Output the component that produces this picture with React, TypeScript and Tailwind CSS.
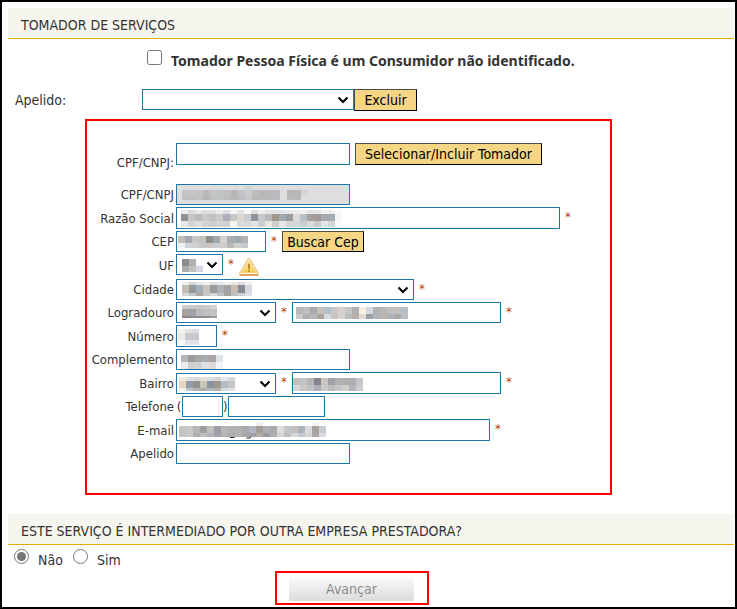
import type { ReactNode } from "react";

type Band = { h: number; cells: string };

const fieldBase = "shrink-0 rounded-none border border-[#1f78a4] text-black outline-none";

const buttonBase =
  "shrink-0 border border-t-[#4d4d4d] border-l-[#4d4d4d] border-r-black border-b-black bg-[#f4d684] text-center text-sm leading-5 text-black";

// Blurred-out value: bands of 7px wide blocks, "-" leaves a hole.
function Mosaic({ className, bands }: { className: string; bands: Band[] }) {
  const rows = bands.map((band) => band.cells.split(" "));
  const height = bands.reduce((sum, band) => sum + band.h, 0);
  const width = Math.max(...rows.map((row) => row.length)) * 7;
  let y = 0;

  return (
    <svg
      aria-hidden="true"
      width={width}
      height={height}
      shapeRendering="crispEdges"
      className={`pointer-events-none absolute ${className}`}
    >
      {bands.map((band, r) => {
        const top = y;
        y += band.h;
        return rows[r].map((cell, c) =>
          cell === "-" ? null : (
            <rect key={`${r}-${c}`} x={c * 7} y={top} width={7} height={band.h} fill={`#${cell}`} />
          ),
        );
      })}
    </svg>
  );
}

function Row({ id, label, children }: { id: string; label: string; children: ReactNode }) {
  return (
    <div className="flex items-end gap-0.5">
      <label htmlFor={id} className="w-[87px] shrink-0 text-right leading-5 whitespace-nowrap">
        {label}
      </label>
      <div className="flex items-end">{children}</div>
    </div>
  );
}

function Field({
  id,
  label,
  className,
  children,
}: {
  id: string;
  label?: string;
  className: string;
  children?: ReactNode;
}) {
  return (
    <div className="relative flex">
      <input id={id} type="text" aria-label={label} className={`${fieldBase} ${className}`} />
      {children}
    </div>
  );
}

function Choice({ id, className, children }: { id: string; className: string; children?: ReactNode }) {
  return (
    <div className="relative flex">
      <select id={id} className={`${fieldBase} h-[21px] appearance-none bg-white ${className}`}>
        <option value=""></option>
      </select>
      <svg
        aria-hidden="true"
        width="12"
        height="8"
        viewBox="0 0 12 8"
        className="pointer-events-none absolute right-[5px] top-[7px]"
      >
        <path d="M1.5 1.4 L6 5.9 L10.5 1.4" fill="none" stroke="#000" strokeWidth="2.1" />
      </svg>
      {children}
    </div>
  );
}

function Required() {
  return <span className="w-4 self-start text-center leading-5 text-[#b8400c]">*</span>;
}

function SectionTitle({ children }: { children: ReactNode }) {
  return (
    <h2 className="ml-1.5 mr-px h-[31px] border-b border-[#e6ac00] bg-[#f6f6ee] pl-[13px] pt-[7px] font-['DejaVu_Sans_Condensed','DejaVu_Sans',sans-serif] text-sm leading-5">
      {children}
    </h2>
  );
}

function WarningIcon() {
  return (
    <svg width="20" height="18" viewBox="0 0 20 18" role="img" aria-label="Aviso">
      <defs>
        <linearGradient id="warn" x1="0" y1="0" x2="0" y2="1">
          <stop offset="0" stopColor="#fbeeb4" />
          <stop offset="1" stopColor="#f5ca4c" />
        </linearGradient>
      </defs>
      <path
        d="M10 .9 Q10.8 .9 11.3 1.9 L19 15.2 Q19.6 17 17.8 17 L2.2 17 Q.4 17 1 15.2 L8.7 1.9 Q9.2 .9 10 .9 Z"
        fill="#fffbe8"
        stroke="#ecc274"
        strokeWidth="1.3"
        strokeLinejoin="round"
      />
      <path d="M1.4 16.9 H18.6" stroke="#dc9c58" strokeWidth="1.6" strokeLinecap="round" />
      <path d="M10 3.4 L16.8 14.6 H3.2 Z" fill="url(#warn)" stroke="#f0c650" strokeWidth=".8" strokeLinejoin="round" />
      <path d="M10 6.6 V10.6" stroke="#b8922c" strokeWidth="2" strokeLinecap="round" />
      <circle cx="10" cy="13" r="1.1" fill="#b8922c" />
    </svg>
  );
}

export default function App() {
  return (
    <main className="min-h-screen border-2 border-black bg-white pt-1.5 font-['DejaVu_Sans_Condensed','DejaVu_Sans',sans-serif] text-[13px] text-[#333]">
      <SectionTitle>TOMADOR DE SERVIÇOS</SectionTitle>

      <div className="ml-[145px] mt-[11px] flex h-[22px] items-start gap-[9px]">
        <input id="anonimo" type="checkbox" className="size-[15px] shrink-0" />
        <label htmlFor="anonimo" className="font-['Noto_Sans',sans-serif] text-sm font-bold leading-[22px]">
          Tomador Pessoa Física é um Consumidor não identificado.
        </label>
      </div>

      <div className="ml-[13px] mt-[17px] flex items-start">
        <label htmlFor="apelido-busca" className="w-[127px] text-sm leading-[22px]">
          Apelido:
        </label>
        <Choice id="apelido-busca" className="w-[212px]" />
        <button type="button" className={`${buttonBase} h-[22px] w-[63px]`}>
          Excluir
        </button>
      </div>

      <section className="ml-[83px] mt-2 flex w-[527px] flex-col gap-0.5 border-2 border-[#f00] pb-[29px] pt-[22px]">
        <div className="mb-2 flex h-[31px] items-start gap-0.5">
          <label htmlFor="busca" className="w-[87px] self-end text-right leading-[22px]">
            CPF/CNPJ:
          </label>
          <Field id="busca" className="h-[22px] w-[174px] bg-white" />
          <button type="button" className={`${buttonBase} ml-[3px] h-[22px] w-[187px]`}>
            Selecionar/Incluir Tomador
          </button>
        </div>

        <Row id="cpf" label="CPF/CNPJ">
          <Field id="cpf" className="h-[21px] w-[174px] bg-[#dedede]">
            <Mosaic
              className="left-1.5 top-0.5"
              bands={[
                { h: 4, cells: "- - - - - - - - - d3d4d7" },
                { h: 6, cells: "c4c4c4 c6c6c8 c4c4c4 bababa c4c4c4 bfc4c7 c0c0c0 b6b6b6 c3c3c3 cdced1 bdbdbd b8b8ba bababa b8babd - b7b7b5 b8b8b5 d3d5d9" },
                { h: 4, cells: "c0c0c0 bfbfc1 c2c2c2 b7b7b7 bfc0c3 c4c4c4 bdbdbd b9b9b9 bcbfc3 c6c7ca b9b9b9 bababa b8b8b8 b9bbbf - bcbcba b7b7b7" },
              ]}
            />
          </Field>
        </Row>

        <Row id="razao" label="Razão Social">
          <Field id="razao" className="h-[22px] w-[384px] bg-white">
            <Mosaic
              className="left-[5px] top-[3px]"
              bands={[
                { h: 4, cells: "ececec dcdcdc e6e6e6 dcdcdc e0e0e0 ececec dedce4 f4f4f4 e2e2e4 f7f7f7 dfdfdf f0f0f0 e5e5e5 e4e4e4 dfe5e8 e7e7e7 ededed f0f0f0 e2e5e8 e5e5e5 f1f1f1 ededed f8f8f8" },
                { h: 7, cells: "919194 c5c5c3 b8babb c8c8c6 c1c1c1 c7cbcc b0aeba c4c6c7 dfd6d2 c7ccd2 8f9499 c5c9cd b7b9bb a4978e a1aaaf 9b9b9e dfd7d3 b5c1c9 a89f98 9f9b99 aaa7ae a4adb3 f5f5f7" },
                { h: 6, cells: "e6e7ea d4d4d4 dedede d3d3d1 cecece d2d2d2 d0d1d5 f7f4ec d8dade d8d8d8 e3e3e3 cfcfd1 e9e7de cfcfcd e6e6e6 d5d5d5 d3d7da cdcdcf d9dcdc cacaca e2e3e6 d6d7d9 f9f9fa" },
              ]}
            />
          </Field>
          <Required />
        </Row>

        <Row id="cep" label="CEP">
          <Field id="cep" className="h-[21px] w-[90px] bg-white">
            <Mosaic
              className="left-0.5 top-[5px]"
              bands={[
                { h: 7, cells: "c5bbb4 a4aab1 c7c7c7 c8c3bd 8c908f a0a7ae d4d1ce acaeb1 9caab3 b3b3b3" },
                { h: 5, cells: "f0f0f0 d0d4d8 cfcfcf c5c7c9 c9c6c1 c9cdcf cdcdcd b9b9b9 d0cdcb c6c9ce" },
              ]}
            />
          </Field>
          <Required />
          <button type="button" className={`${buttonBase} h-[21px] w-[82px]`}>
            Buscar Cep
          </button>
        </Row>

        <div className="flex h-[23px] items-start gap-0.5">
          <label htmlFor="uf" className="w-[87px] text-right leading-6">
            UF
          </label>
          <div className="flex items-start">
            <Choice id="uf" className="w-[47px]">
              <Mosaic
                className="left-1.5 top-[5px]"
                bands={[
                  { h: 7, cells: "8b8a8d b1b0ae fafbfd" },
                  { h: 6, cells: "b2adad c0c0c2 d5d7e0" },
                ]}
              />
            </Choice>
            <Required />
            <div className="pt-1">
              <WarningIcon />
            </div>
          </div>
        </div>

        <Row id="cidade" label="Cidade">
          <Choice id="cidade" className="w-[238px]">
            <Mosaic
              className="left-1.5 top-[3px]"
              bands={[
                { h: 3, cells: "ededeb d6d6d6 e8e8e8 eeeef0 e2e2e0 e6e8ea eeeeee e8e8e8 dedede f0f0f0" },
                { h: 8, cells: "c5bcb4 96989a a6b2bb cac3b9 9a9c9e aeb3b8 9fa1a3 c8beb4 868d92 d5d9de" },
                { h: 3, cells: "d3d5d8 c4c7ca aaa6a0 c6c9cc d8d8d8 bfc1c4 a8a29d bec2c6 d2d2d2 dee1e5" },
              ]}
            />
          </Choice>
          <Required />
        </Row>

        <Row id="logradouro" label="Logradouro">
          <Choice id="logradouro" className="w-[100px]">
            <Mosaic
              className="left-1.5 top-[3px]"
              bands={[
                { h: 4, cells: "d0cecc c9c9c9 c8c8c8 cbcbcb d5d5d5" },
                { h: 7, cells: "aaa19b 9ea4a9 b9bbbd c0c0c0 c0c2c4" },
                { h: 2, cells: "8d8886 8c8c8c 8c8c8c 8c8c8c 9b9b9b" },
              ]}
            />
          </Choice>
          <Required />
          <Field id="logradouro-nome" label="Nome do logradouro" className="h-[21px] w-[209px] bg-white">
            <Mosaic
              className="left-1 top-[5px]"
              bands={[
                { h: 7, cells: "b7b8bb c0bfba a8a9ac c5c0bb b4c0c9 c8c8c8 d9d0cd c3c7c8 aeb0b3 fbf0e3 d2d9e1 b2b2b0 b7b6b8 c0c0c0 c5bfba b8bec7" },
                { h: 5, cells: "c7cbcc b1afac b5b7ba a7a4a1 d7dce1 c8c6c0 d9d2d0 b5bebe b8ada7 dfdcd7 9fa2aa b0b6b9 beb3ad abb1b7 a8a8a6 bbbdc1" },
              ]}
            />
          </Field>
          <Required />
        </Row>

        <Row id="numero" label="Número">
          <Field id="numero" className="h-[22px] w-[41px] bg-white">
            <Mosaic
              className="left-0.5 top-1"
              bands={[
                { h: 4, cells: "f3f3f1 e3e3e5 dcdde0" },
                { h: 7, cells: "eeeee9 c7c9ca c8c9cc" },
                { h: 5, cells: "f8f8f8 e2e3e8 e3e3e5" },
              ]}
            />
          </Field>
          <Required />
        </Row>

        <Row id="complemento" label="Complemento">
          <Field id="complemento" className="h-[21px] w-[174px] bg-white">
            <Mosaic
              className="left-[5px] top-1.5"
              bands={[
                { h: 7, cells: "b6b6b8 9a9a9a aaa7a2 a7aeb3 a9a4a2 dfe4e9" },
                { h: 7, cells: "ececec d0d0ce d2d2d2 dfe2e4 dfdbdb f1f3f4" },
              ]}
            />
          </Field>
        </Row>

        <Row id="bairro" label="Bairro">
          <Choice id="bairro" className="w-[100px]">
            <Mosaic
              className="left-[3px] top-1"
              bands={[
                { h: 4, cells: "f3e9df dedfe2 dadada e4e1da dbdde1 d9d5d3 e5e9ec d9d9d9" },
                { h: 7, cells: "e7d3bd 929cab 929292 c8c4b6 89929f a3988e b4bcc6 c5c5c5" },
                { h: 3, cells: "f7f0e9 bdc5cb b0b0b0 aeafaa b3b9c1 b5b0aa d6dbe0 e2e2e2" },
              ]}
            />
          </Choice>
          <Required />
          <Field id="bairro-nome" label="Nome do bairro" className="h-[22px] w-[209px] bg-white">
            <Mosaic
              className="left-px top-1.5"
              bands={[
                { h: 7, cells: "c4bfb9 c1c4c4 b4b6b3 83828e c8c4bf a0a1a4 b2b2b4 aeb0ad acadb1 c5c6c9" },
                { h: 6, cells: "d7d7d9 ccc7c3 bfc3c7 b2aeba c7cbcb bfbcbd c4c6c8 cfd1cf b5b3bc cccdd3" },
              ]}
            />
          </Field>
          <Required />
        </Row>

        <Row id="telefone" label="Telefone">
          <span className="w-1.5 text-center leading-5">(</span>
          <Field id="telefone" className="h-[21px] w-[41px] bg-white" />
          <span className="w-[5px] leading-5">)</span>
          <Field id="telefone-numero" label="Número do telefone" className="h-[21px] w-[97px] bg-white" />
        </Row>

        <Row id="email" label="E-mail">
          <Field id="email" className="h-[22px] w-[314px] bg-white">
            <Mosaic
              className="left-[3px] top-[3px]"
              bands={[
                { h: 4, cells: "- - - - - - - - - - - f0f0f0 - - - - - - - f3f3f3" },
                { h: 7, cells: "c6c3c0 c8c8c8 b6b6b8 a0a0a2 c2c0bd 9c9da6 b8b8b8 b2b2b0 b1b1af aaaaa8 b0b5c1 a49f96 adb0b5 aba8ac dedede c0c5c9 c5bfba abb3bc dadbde aaa19e c7cdd2" },
                { h: 4, cells: "c4c4c2 c7cbcc b0b0b0 bdbdbb b0b2b5 a3a5ae b2b2b0 adadab b3b3b1 a7a7a5 9d9ea5 b4b0a9 9a9ca1 b0b0b0 d3d5d8 bcbebe dbd8d3 c2c9d1 d7d5d2 aca6a4 d8dbdf" },
              ]}
            />
            <svg
              aria-hidden="true"
              width="24"
              height="3"
              viewBox="0 0 24 3"
              className="pointer-events-none absolute left-[53px] top-[18px]"
            >
              <path d="M1 .5 H5.5 M17.5 1 H21 L22 0" fill="none" stroke="#222" />
            </svg>
          </Field>
          <Required />
        </Row>

        <Row id="apelido" label="Apelido">
          <Field id="apelido" className="h-[21px] w-[174px] bg-white" />
        </Row>
      </section>

      <div className="mt-[19px]">
        <SectionTitle>ESTE SERVIÇO É INTERMEDIADO POR OUTRA EMPRESA PRESTADORA?</SectionTitle>
      </div>

      <div className="ml-3 mt-1 flex h-[22px] items-start text-sm">
        <input id="nao" type="radio" name="intermediado" defaultChecked className="size-[15px] accent-[#767676]" />
        <label htmlFor="nao" className="ml-[9px] w-[35px] leading-[22px]">
          Não
        </label>
        <input id="sim" type="radio" name="intermediado" className="size-[15px] accent-[#767676]" />
        <label htmlFor="sim" className="ml-[9px] leading-[22px]">
          Sim
        </label>
      </div>

      <div className="ml-[273px] flex h-[34px] w-[154px] items-start border-2 border-[#f00] pl-3 pt-1">
        <button
          type="button"
          className="h-6 w-[125px] bg-linear-to-b from-[#fafafa] to-[#dcdcdc] text-center text-sm leading-6 text-[#8c8c8c]"
        >
          Avançar
        </button>
      </div>
    </main>
  );
}
